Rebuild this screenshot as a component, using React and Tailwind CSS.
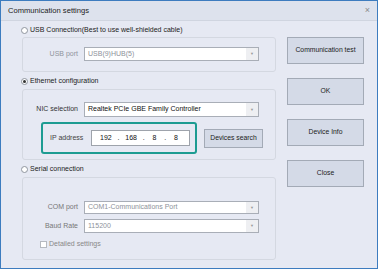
import React from 'react';

const font = { fontFamily: '"Liberation Sans", Arial, sans-serif' };

function Radio({ checked, label }) {
  return (
    <div className="flex items-center h-[12px] gap-[2px] text-[7px] text-[#222]">
      <span className="w-[7px] h-[7px] rounded-full border border-[#8f959e] bg-white flex items-center justify-center">
        {checked && <span className="w-[3px] h-[3px] rounded-full bg-[#333]" />}
      </span>
      <span>{label}</span>
    </div>
  );
}

function Select({ value, disabled, h = 'h-[14px]' }) {
  return (
    <div className={`w-[175px] ${h} flex border border-[#a9aeb7] bg-white`}>
      <div className={`flex-1 flex items-center pl-[3px] text-[7px] ${disabled ? 'text-[#8d929a]' : 'text-[#111]'}`}>
        {value}
      </div>
      <div className="w-[12px] flex items-center justify-center bg-[#eeeff2] text-[4px] text-[#999]">▼</div>
    </div>
  );
}

function Field({ label, labelColor = 'text-[#555]', children }) {
  return (
    <div className="flex items-center">
      <div className={`w-[61px] text-right pr-[6px] text-[7px] ${labelColor}`}>{label}</div>
      {children}
    </div>
  );
}

function SideButton({ label }) {
  return (
    <div className="w-[77px] h-[27px] flex items-center justify-center border border-[#a3aab6] bg-[#d4dae7] text-[6.8px] text-[#222]">
      {label}
    </div>
  );
}

export default function App() {
  return (
    <div style={font} className="w-[378px] h-[269px] border border-[#3d7cbf] bg-[#e6e9f3] flex flex-col overflow-hidden">
      <div className="h-[20px] shrink-0 bg-[#dde2ed] border-b border-[#d0d5e0] flex items-center justify-between pl-[7px] pr-[7px]">
        <span className="text-[7.6px] text-[#222]">Communication settings</span>
        <span className="text-[9px] text-[#8a8a8a] leading-none">×</span>
      </div>

      <div className="flex pl-[20px]">
        <div className="w-[255px] pt-[3px] flex flex-col">
          <Radio label="USB Connection(Best to use well-shielded cable)" />
          <div className="ml-[1px] mt-[1px] h-[35px] border border-[#d4d8e1] rounded-[3px] pt-[9px]">
            <Field label="USB port" labelColor="text-[#8f949c]">
              <Select value="USB(9)HUB(5)" disabled />
            </Field>
          </div>

          <div className="mt-[3px]">
            <Radio checked label="Ethernet configuration" />
          </div>
          <div className="ml-[1px] mt-[2px] h-[71px] border border-[#d4d8e1] rounded-[3px] pt-[12px]">
            <Field label="NIC selection" labelColor="text-[#333]">
              <Select value="Realtek PCIe GBE Family Controller" h="h-[15px]" />
            </Field>
            <div className="flex items-center mt-[5px]">
              <div className="ml-[18px] w-[156px] h-[32px] border-2 border-[#1d9c92] rounded-[3px] flex items-center">
                <span className="ml-[7px] w-[41px] text-[7px] text-[#444]">IP address</span>
                <div className="w-[99px] h-[16px] border border-[#9ea3ab] bg-white flex items-center pl-[8px] text-[7px] text-[#111] whitespace-pre">
                  {'192   .   168   .    8    .    8'}
                </div>
              </div>
              <div className="ml-[7px] w-[59px] h-[19px] border border-[#a3aab6] bg-[#d4dae7] flex items-center justify-center text-[6.8px] text-[#222]">
                Devices search
              </div>
            </div>
          </div>

          <div className="mt-[3px]">
            <Radio label="Serial connection" />
          </div>
          <div className="ml-[1px] mt-[2px] h-[83px] border border-[#d4d8e1] rounded-[3px] pt-[23px]">
            <Field label="COM port" labelColor="text-[#777]">
              <Select value="COM1-Communications Port" disabled h="h-[13px]" />
            </Field>
            <div className="mt-[5px]">
              <Field label="Baud Rate" labelColor="text-[#777]">
                <Select value="115200" disabled />
              </Field>
            </div>
            <div className="flex items-center gap-[2px] ml-[17px] mt-[6px] text-[7px] text-[#888]">
              <span className="w-[7px] h-[7px] border border-[#b5b9c0] bg-white" />
              <span>Detailed settings</span>
            </div>
          </div>
        </div>

        <div className="ml-[11px] pt-[16px] flex flex-col gap-[14px]">
          <SideButton label="Communication test" />
          <SideButton label="OK" />
          <SideButton label="Device Info" />
          <SideButton label="Close" />
        </div>
      </div>
    </div>
  );
}
